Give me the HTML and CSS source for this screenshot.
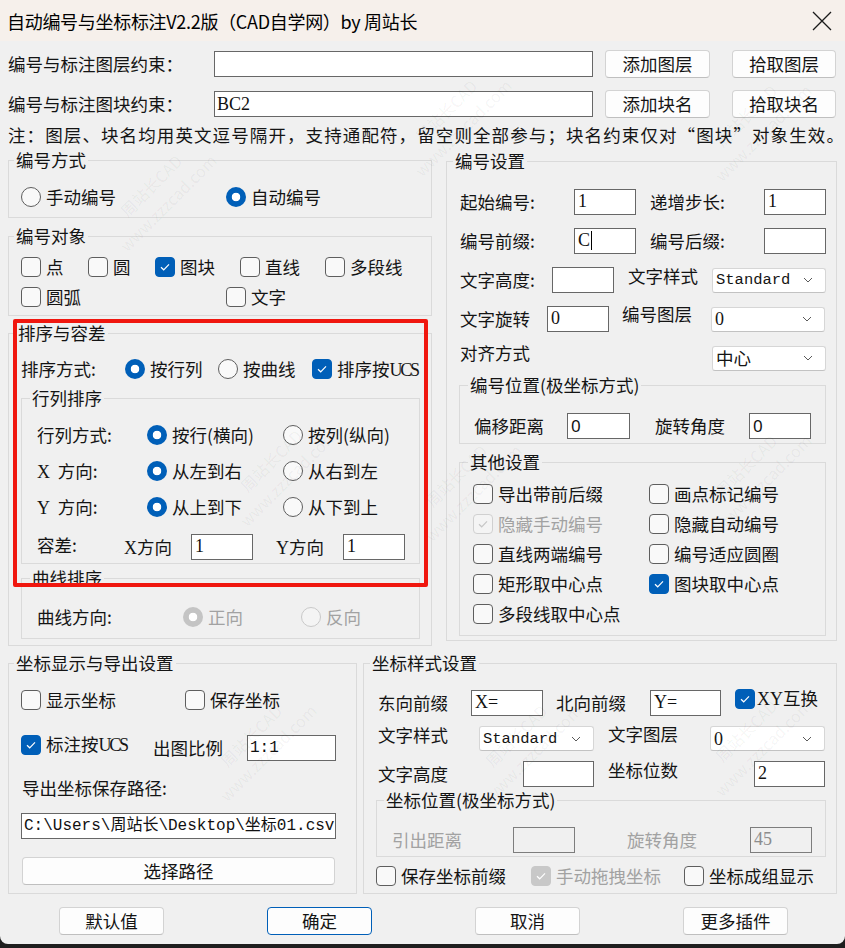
FILE: index.html
```html
<!DOCTYPE html>
<html lang="zh-CN">
<head>
<meta charset="utf-8">
<title>自动编号与坐标标注V2.2版</title>
<link rel="stylesheet" href="styles.css">
</head>
<body>
<div class="window">
  <header class="titlebar">
    <span class="title">自动编号与坐标标注V2.2版（CAD自学网）by 周站长</span>
    <svg class="close" width="22" height="22" viewBox="0 0 22 22"><path d="M2 2 L20 20 M20 2 L2 20" stroke="#1a1a1a" stroke-width="1.3" fill="none"/></svg>
  </header>

  <main class="content">
    <div class="filter-row">
      <span class="filter-label">编号与标注图层约束：</span>
      <div class="field filter-input"></div>
      <button class="btn btn-add">添加图层</button>
      <button class="btn btn-pick">拾取图层</button>
    </div>
    <div class="filter-row">
      <span class="filter-label">编号与标注图块约束：</span>
      <div class="field filter-input">BC2</div>
      <button class="btn btn-add">添加块名</button>
      <button class="btn btn-pick">拾取块名</button>
    </div>
    <p class="note">注：图层、块名均用英文逗号隔开，支持通配符，留空则全部参与；块名约束仅对“图块”对象生效。</p>

    <div class="columns top-columns">
      <div class="col-left">
        <fieldset class="group grp-mode">
          <legend>编号方式</legend>
          <div class="pad pad-mode">
            <div class="row r22">
              <span class="opt w205"><i class="radio"></i>手动编号</span>
              <span class="opt"><i class="radio on"></i>自动编号</span>
            </div>
          </div>
        </fieldset>

        <fieldset class="group grp-objects">
          <legend>编号对象</legend>
          <div class="pad pad-objects">
            <div class="row r22">
              <span class="opt w67"><i class="check"></i>点</span>
              <span class="opt w67"><i class="check"></i>圆</span>
              <span class="opt w85"><i class="check on"><svg viewBox="0 0 20 20"><path d="M6 10.2 L8.7 12.8 L14 7.4"/></svg></i>图块</span>
              <span class="opt w85"><i class="check"></i>直线</span>
              <span class="opt"><i class="check"></i>多段线</span>
            </div>
            <div class="row r22 gap8">
              <span class="opt w205"><i class="check"></i>圆弧</span>
              <span class="opt"><i class="check"></i>文字</span>
            </div>
          </div>
        </fieldset>

        <fieldset class="group grp-sort">
          <legend>排序与容差</legend>
          <div class="pad pad-sort">
            <div class="row r22">
              <span class="lbl w104">排序方式:</span>
              <span class="opt w93"><i class="radio on"></i>按行列</span>
              <span class="opt w94"><i class="radio"></i>按曲线</span>
              <span class="opt"><i class="check on"><svg viewBox="0 0 20 20"><path d="M6 10.2 L8.7 12.8 L14 7.4"/></svg></i><span>排序按<span class="latin narrow">UCS</span></span></span>
            </div>

            <fieldset class="group grp-grid">
              <legend>行列排序</legend>
              <div class="pad pad-grid">
                <div class="row r22">
                  <span class="lbl w110">行列方式:</span>
                  <span class="opt w136"><i class="radio on"></i>按行(横向)</span>
                  <span class="opt"><i class="radio"></i>按列(纵向)</span>
                </div>
                <div class="row r22 gap14">
                  <span class="lbl w110"><span class="latin">X</span> &nbsp;方向:</span>
                  <span class="opt w136"><i class="radio on"></i>从左到右</span>
                  <span class="opt"><i class="radio"></i>从右到左</span>
                </div>
                <div class="row r22 gap14">
                  <span class="lbl w110"><span class="latin">Y</span> &nbsp;方向:</span>
                  <span class="opt w136"><i class="radio on"></i>从上到下</span>
                  <span class="opt"><i class="radio"></i>从下到上</span>
                </div>
                <div class="row r26 gap16">
                  <span class="lbl w87 up4">容差:</span>
                  <span class="lbl w67"><span class="latin">X</span>方向</span>
                  <div class="field w62">1</div>
                  <span class="lbl w67 ml23"><span class="latin">Y</span>方向</span>
                  <div class="field w62">1</div>
                </div>
              </div>
            </fieldset>

            <fieldset class="group grp-curve">
              <legend>曲线排序</legend>
              <div class="pad pad-curve">
                <div class="row r22">
                  <span class="lbl w146">曲线方向:</span>
                  <span class="opt w118 off"><i class="radio on"></i>正向</span>
                  <span class="opt off"><i class="radio"></i>反向</span>
                </div>
              </div>
            </fieldset>
          </div>
        </fieldset>
      </div>

      <fieldset class="group grp-number">
        <legend>编号设置</legend>
        <div class="pad pad-number">
          <div class="row r26 inset1">
            <span class="lbl w114">起始编号:</span>
            <div class="field w62">1</div>
            <span class="lbl w114 ml14">递增步长:</span>
            <div class="field w62">1</div>
          </div>
          <div class="row r26 inset1 gap13">
            <span class="lbl w114">编号前缀:</span>
            <div class="field w62">C<span class="caret"></span></div>
            <span class="lbl w114 ml14">编号后缀:</span>
            <div class="field w62"></div>
          </div>
          <div class="row r26 inset1 gap13">
            <span class="lbl w92">文字高度:</span>
            <div class="field w62"></div>
            <span class="lbl w84 ml14 lift2">文字样式</span>
            <div class="select w114"><span class="mono">Standard</span><svg class="chev" viewBox="0 0 10 6"><path d="M1 1 L5 5 L9 1"/></svg></div>
          </div>
          <div class="row r26 inset1 gap13">
            <span class="lbl w87">文字旋转</span>
            <div class="field w62">0</div>
            <span class="lbl w89 ml13 lift3">编号图层</span>
            <div class="select w114"><span class="serif">0</span><svg class="chev" viewBox="0 0 10 6"><path d="M1 1 L5 5 L9 1"/></svg></div>
          </div>
          <div class="row r26 inset1 gap13">
            <span class="lbl w252 lift3">对齐方式</span>
            <div class="select w114"><span>中心</span><svg class="chev" viewBox="0 0 10 6"><path d="M1 1 L5 5 L9 1"/></svg></div>
          </div>

          <fieldset class="group grp-offset">
            <legend>编号位置(极坐标方式)</legend>
            <div class="pad pad-offset">
              <div class="row r26">
                <span class="lbl w93">偏移距离</span>
                <div class="field w63 sans">0</div>
                <span class="lbl w94 ml25">旋转角度</span>
                <div class="field w62 sans">0</div>
              </div>
            </div>
          </fieldset>

          <fieldset class="group grp-other">
            <legend>其他设置</legend>
            <div class="pad pad-other">
              <div class="row r22">
                <span class="opt w176"><i class="check"></i>导出带前后缀</span>
                <span class="opt"><i class="check"></i>画点标记编号</span>
              </div>
              <div class="row r22 gap8">
                <span class="opt w176 off"><i class="check on"><svg viewBox="0 0 20 20"><path d="M6 10.2 L8.7 12.8 L14 7.4"/></svg></i>隐藏手动编号</span>
                <span class="opt"><i class="check"></i>隐藏自动编号</span>
              </div>
              <div class="row r22 gap8">
                <span class="opt w176"><i class="check"></i>直线两端编号</span>
                <span class="opt"><i class="check"></i>编号适应圆圈</span>
              </div>
              <div class="row r22 gap8">
                <span class="opt w176"><i class="check"></i>矩形取中心点</span>
                <span class="opt"><i class="check on"><svg viewBox="0 0 20 20"><path d="M6 10.2 L8.7 12.8 L14 7.4"/></svg></i>图块取中心点</span>
              </div>
              <div class="row r22 gap8">
                <span class="opt"><i class="check"></i>多段线取中心点</span>
              </div>
            </div>
          </fieldset>
        </div>
      </fieldset>
    </div>

    <div class="columns bottom-columns">
      <fieldset class="group grp-export">
        <legend>坐标显示与导出设置</legend>
        <div class="pad pad-export">
          <div class="row r22">
            <span class="opt w164"><i class="check"></i>显示坐标</span>
            <span class="opt"><i class="check"></i>保存坐标</span>
          </div>
          <div class="row r26 gap24">
            <span class="opt w132 lift2"><i class="check on"><svg viewBox="0 0 20 20"><path d="M6 10.2 L8.7 12.8 L14 7.4"/></svg></i><span>标注按<span class="latin narrow">UCS</span></span></span>
            <span class="lbl w94">出图比例</span>
            <div class="field w89 mono">1:1</div>
          </div>
          <div class="path-label">导出坐标保存路径:</div>
          <div class="field path-field mono">C:\Users\周站长\Desktop\坐标01.csv</div>
          <button class="btn btn-path">选择路径</button>
        </div>
      </fieldset>

      <fieldset class="group grp-style">
        <legend>坐标样式设置</legend>
        <div class="pad pad-style">
          <div class="row r26">
            <span class="lbl w93 ml2">东向前缀</span>
            <div class="field w72">X=</div>
            <span class="lbl w94 ml13">北向前缀</span>
            <div class="field w71">Y=</div>
            <span class="opt ml14 lift3 tight"><i class="check on"><svg viewBox="0 0 20 20"><path d="M6 10.2 L8.7 12.8 L14 7.4"/></svg></i><span><span class="latin">XY</span>互换</span></span>
          </div>
          <div class="row r25 gap10">
            <span class="lbl w101 ml2 lift2">文字样式</span>
            <div class="select w115"><span class="mono">Standard</span><svg class="chev" viewBox="0 0 10 6"><path d="M1 1 L5 5 L9 1"/></svg></div>
            <span class="lbl w102 ml14 lift3">文字图层</span>
            <div class="select w115"><span class="serif">0</span><svg class="chev" viewBox="0 0 10 6"><path d="M1 1 L5 5 L9 1"/></svg></div>
          </div>
          <div class="row r26 gap10">
            <span class="lbl w145 ml2">文字高度</span>
            <div class="field w71"></div>
            <span class="lbl w146 ml14 lift2">坐标位数</span>
            <div class="field w71">2</div>
          </div>

          <fieldset class="group grp-polar">
            <legend>坐标位置(极坐标方式)</legend>
            <div class="pad pad-polar">
              <div class="row r26">
                <span class="lbl w121 dim">引出距离</span>
                <div class="field w62 disabled"></div>
                <span class="lbl w123 ml52 dim">旋转角度</span>
                <div class="field w62 disabled">45</div>
              </div>
            </div>
          </fieldset>

          <div class="row r22 gap8">
            <span class="opt w155"><i class="check"></i>保存坐标前缀</span>
            <span class="opt w153 off solid"><i class="check on"><svg viewBox="0 0 20 20"><path d="M6 10.2 L8.7 12.8 L14 7.4"/></svg></i>手动拖拽坐标</span>
            <span class="opt"><i class="check"></i>坐标成组显示</span>
          </div>
        </div>
      </fieldset>
    </div>

    <div class="actions">
      <button class="btn act">默认值</button>
      <button class="btn act default">确定</button>
      <button class="btn act">取消</button>
      <button class="btn act">更多插件</button>
    </div>
  </main>

  <!-- faint site watermark tiled across the dialog -->
  <div class="watermarks" aria-hidden="true">
    <span class="wm wm1">周站长CAD<br>www.zzzcad.com</span>
    <span class="wm wm2">周站长CAD<br>www.zzzcad.com</span>
    <span class="wm wm3">周站长CAD<br>www.zzzcad.com</span>
    <span class="wm wm4">周站长CAD<br>www.zzzcad.com</span>
    <span class="wm wm5">周站长CAD<br>www.zzzcad.com</span>
    <span class="wm wm6">周站长CAD<br>www.zzzcad.com</span>
    <span class="wm wm7">周站长CAD<br>www.zzzcad.com</span>
    <span class="wm wm8">周站长CAD<br>www.zzzcad.com</span>
    <span class="wm wm9">周站长CAD<br>www.zzzcad.com</span>
  </div>

  <div class="marker"></div>
</div>
</body>
</html>
```

FILE: styles.css
```css
* { box-sizing: border-box; }

html, body { margin: 0; padding: 0; }

body {
  width: 845px;
  height: 948px;
  overflow: hidden;
  background: #1e1e1e;
  font-family: "Noto Sans CJK SC", "Noto Sans", sans-serif;
  color: #141414;
}

.window {
  position: relative;
  width: 845px;
  height: 944px;
  background: #f0f0f0;
  border-radius: 0 0 8px 8px;
  overflow: hidden;
}

/* title bar */
.titlebar {
  height: 41px;
  background: #f6f0eb;
  display: flex;
  align-items: center;
  justify-content: space-between;
  padding: 0 12px 0 7px;
}
.title { font-size: 18px; line-height: 24px; color: #000; letter-spacing: -0.3px; }
.close { width: 22px; height: 22px; }

/* dialog body */
.content {
  padding: 0 8px;
  font-size: 17.5px;
  line-height: 22px;
}

.latin { font-family: "Liberation Serif", serif; font-size: 18px; }
.latin.narrow { letter-spacing: -2.2px; padding-right: 2px; }

.filter-row { display: flex; align-items: center; height: 28px; margin-top: 9px; }
.filter-row + .filter-row { margin-top: 12px; }
.filter-label { width: 206px; flex: none; }
.filter-input { width: 379px; height: 27px; }
.filter-row .btn-add { width: 105px; margin-left: 12px; }
.filter-row .btn-pick { width: 104px; margin-left: 22px; }

.note { margin: 7px 0 0; line-height: 20px; letter-spacing: 1.1px; white-space: nowrap; }

.btn {
  height: 28px;
  padding: 0;
  background: #fdfdfd;
  border: 1px solid #d3d3d3;
  border-bottom-color: #bfbfbf;
  border-radius: 4px;
  font: inherit;
  font-size: 17.5px;
  line-height: 22px;
  color: #141414;
  display: flex;
  align-items: center;
  justify-content: center;
  flex: none;
}

/* group boxes */
.group {
  margin: 0;
  padding: 0;
  min-width: 0;
  border: 1px solid #dadada;
  border-radius: 0;
}
.group > legend {
  padding: 0 2px;
  margin-left: 5px;
  font-size: 17.5px;
  line-height: 20px;
}

.columns { display: flex; align-items: flex-start; }
.top-columns { margin-top: 5px; gap: 14px; }
.col-left { width: 424px; flex: none; }

.grp-mode { height: 68px; }
.pad-mode { padding: 16px 0 0 12px; }

.grp-objects { height: 90px; margin-top: 8px; }
.pad-objects { padding: 10px 0 0 12px; }

.grp-sort { height: 323px; margin-top: 7px; }
.grp-sort > legend { margin-left: 7px; }
.pad-sort { padding: 15px 11px 0 12px; }

.grp-grid { height: 176px; margin-top: 8px; }
.grp-grid > legend, .grp-curve > legend { margin-left: 8px; }
.pad-grid { padding: 16px 0 0 15px; }

.grp-curve { height: 71px; margin-top: 4px; }
.pad-curve { padding: 18px 0 0 15px; }

.grp-number { width: 391px; height: 490px; margin-top: 1px; flex: none; }
.grp-number > legend { margin-left: 6px; }
.pad-number { padding: 18px 10px 0 12px; }

.grp-offset { height: 69px; margin-top: 4px; }
.grp-offset > legend, .grp-other > legend { margin-left: 8px; }
.pad-offset { padding: 18px 0 0 14px; }

.grp-other { height: 184px; margin-top: 8px; }
.pad-other { padding: 11px 0 0 13px; }

.bottom-columns { margin-top: 7px; gap: 6px; }

.grp-export { width: 349px; height: 241px; flex: none; }
.pad-export { padding: 16px 0 0 12px; }
.path-label { margin: 17px 0 0 1px; line-height: 20px; }
.path-field { width: 315px; height: 26px; margin-top: 15px; font-size: 16px; }
.btn-path { width: 313px; margin: 18px 0 0 1px; }

.grp-style { width: 474px; height: 241px; flex: none; }
.grp-style > legend { margin-left: 6px; }
.pad-style { padding: 17px 10px 0 12px; }

.grp-polar { height: 67px; margin-top: 3px; }
.grp-polar > legend { margin-left: 7px; }
.pad-polar { padding: 17px 0 0 15px; }

/* rows and cells */
.row { display: flex; align-items: center; }
.r22 { height: 22px; }
.r25 { height: 25px; }
.r26 { height: 26px; }
.gap8 { margin-top: 8px; }
.gap10 { margin-top: 10px; }
.gap13 { margin-top: 13px; }
.gap14 { margin-top: 14px; }
.gap16 { margin-top: 16px; }
.gap24 { margin-top: 24px; }
.inset1 { margin-left: 1px; }

.lbl { flex: none; white-space: nowrap; }
.lift2 { align-self: flex-start; margin-top: -2px; }
.lift3 { align-self: flex-start; margin-top: -3px; }
.up4 { margin-top: -4px; }
.dim { color: #a2a2a2; }

.ml2 { margin-left: 2px; }
.ml13 { margin-left: 13px; }
.ml14 { margin-left: 14px; }
.ml23 { margin-left: 23px; }
.ml25 { margin-left: 25px; }
.ml52 { margin-left: 52px; }

.w62 { width: 62px; }
.w63 { width: 63px; }
.w67 { width: 67px; }
.w71 { width: 71px; }
.w72 { width: 72px; }
.w84 { width: 84px; }
.w85 { width: 85px; }
.w87 { width: 87px; }
.w89 { width: 89px; }
.w92 { width: 92px; }
.w93 { width: 93px; }
.w94 { width: 94px; }
.w101 { width: 101px; }
.w102 { width: 102px; }
.w104 { width: 104px; }
.w110 { width: 110px; }
.w114 { width: 114px; }
.w115 { width: 115px; }
.w118 { width: 118px; }
.w121 { width: 121px; }
.w123 { width: 123px; }
.w132 { width: 132px; }
.w136 { width: 136px; }
.w145 { width: 145px; }
.w146 { width: 146px; }
.w153 { width: 153px; }
.w155 { width: 155px; }
.w164 { width: 164px; }
.w176 { width: 176px; }
.w205 { width: 205px; }
.w252 { width: 252px; }

/* text boxes */
.field {
  flex: none;
  height: 26px;
  border: 1px solid #676767;
  background: #fff;
  padding: 0 3px;
  font-family: "Liberation Serif", "Noto Sans CJK SC", serif;
  font-size: 18px;
  line-height: 23px;
  color: #111;
  white-space: nowrap;
  overflow: hidden;
  display: flex;
  align-items: flex-start;
}
.filter-input { font-size: 18px; line-height: 25px; padding-left: 2px; }
.field.mono, .mono { font-family: "Liberation Mono", "Noto Sans CJK SC", monospace; }
.field.mono { font-size: 16px; line-height: 24px; padding-left: 2px; }
.field.sans { font-family: "Noto Sans", sans-serif; font-size: 17px; line-height: 23px; }
.field.disabled { background: #f0f0f0; border-color: #7d7d7d; color: #8c8c8c; }
.caret { display: inline-block; width: 1px; height: 19px; background: #000; margin: 2px 0 0 1px; }

.select {
  flex: none;
  height: 25px;
  background: #fff;
  border: 1px solid #d6d6d6;
  border-bottom-color: #c2c2c2;
  border-radius: 3px;
  display: flex;
  align-items: center;
  justify-content: space-between;
  padding: 0 12px 0 3px;
  white-space: nowrap;
}
.select .mono { font-size: 15.5px; }
.serif { font-family: "Liberation Serif", serif; font-size: 18px; }
.chev { width: 10px; height: 6px; fill: none; stroke: #5a5a5a; stroke-width: 1; }

/* radio buttons and check boxes */
.opt {
  flex: none;
  display: inline-flex;
  align-items: center;
  gap: 5px;
  white-space: nowrap;
}
.opt.tight { gap: 2px; }
.radio, .check {
  flex: none;
  width: 20px;
  height: 20px;
  border: 1px solid #5e5e5e;
  background: #f9f9f9;
  display: inline-flex;
  align-items: center;
  justify-content: center;
}
.radio { border-radius: 50%; }
.radio.on {
  border: none;
  background: radial-gradient(circle, #ffffff 0 4px, #005fb8 4.6px);
}
.check { border-radius: 4px; }
.check.on { background: #005fb8; border-color: #005fb8; }
.check svg { width: 20px; height: 20px; flex: none; }
.check svg path { fill: none; stroke: #fff; stroke-width: 1.2; }

.opt.off { color: #a2a2a2; }
.opt.off .radio { border-color: #c9c9c9; background: #f4f4f4; }
.opt.off .radio.on { border: none; background: radial-gradient(circle, #ffffff 0 4px, #c4c4c4 4.6px); }
.opt.off .check.on { background: #f4f4f4; border-color: #d0d0d0; }
.opt.off .check.on svg path { stroke: #c6c6c6; }
.opt.off.solid .check.on { background: #c8c8c8; border-color: #c8c8c8; }
.opt.off.solid .check.on svg path { stroke: #fff; }

/* dialog buttons */
.actions {
  margin-top: 13px;
  padding-left: 51px;
  display: grid;
  grid-template-columns: repeat(4, 208px);
}
.act { width: 105px; }
.act.default { border: 1px solid #005fb8; }

/* watermark layer */
.watermarks {
  position: absolute;
  inset: 0;
  pointer-events: none;
  overflow: hidden;
}
.wm {
  position: absolute;
  font-family: "Noto Sans CJK SC", sans-serif;
  font-size: 16px;
  line-height: 24px;
  color: rgba(0, 0, 0, 0.05);
  text-align: center;
  white-space: nowrap;
  transform: rotate(-45deg);
  transform-origin: center;
}
.wm1 { left: 95px;  top: 170px; }
.wm2 { left: 390px; top: 95px; }
.wm3 { left: 690px; top: 100px; }
.wm4 { left: 215px; top: 445px; }
.wm5 { left: 400px; top: 460px; }
.wm6 { left: 690px; top: 450px; }
.wm7 { left: 195px; top: 720px; }
.wm8 { left: 460px; top: 720px; }
.wm9 { left: 690px; top: 715px; }

/* red annotation frame drawn over the sorting group */
.marker {
  position: absolute;
  left: 13px;
  top: 319px;
  width: 415px;
  height: 268px;
  border: 4px solid #f0170f;
  border-radius: 2px;
  pointer-events: none;
}
```
